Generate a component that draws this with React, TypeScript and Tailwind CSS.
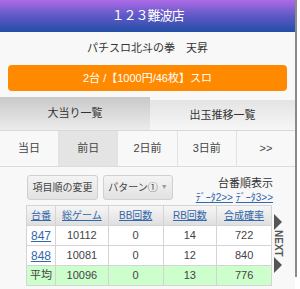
const font = { fontFamily: '"Liberation Sans", "Noto Sans CJK JP", sans-serif' };

const days = ["当日", "前日", "2日前", "3日前", ">>"];
const heads = ["台番", "総ゲーム", "BB回数", "RB回数", "合成確率"];
const rows = [
  { no: "847", g: "10112", bb: "0", rb: "14", p: "722" },
  { no: "848", g: "10081", bb: "0", rb: "12", p: "840" },
];

export default function App() {
  return (
    <div className="flex h-[289px] w-[300px] overflow-hidden bg-white" style={font}>
      <div className="flex w-[295px] flex-col bg-[#f8f8f8]">
        {/* 店名 */}
        <div className="flex h-[32px] items-center justify-center bg-gradient-to-b from-[#ad6ae6] via-[#5d58c6] to-[#1f4ea6] text-[13px] tracking-[-1px] text-white">
          １２３難波店
        </div>

        <div className="flex h-[33px] items-center justify-center text-[11px] text-[#333]">
          パチスロ北斗の拳　天昇
        </div>

        <div className="mx-[8px] flex h-[26px] items-center justify-center rounded-[4px] bg-[#ff8a00] text-[11px] text-white">
          2台 /【1000円/46枚】スロ
        </div>

        {/* タブ */}
        <div className="mt-[6px] flex h-[34px] border-b border-[#d8d8d8]">
          <div className="flex w-[150px] items-center justify-center bg-gradient-to-b from-[#c9c9c9] to-[#ececec] text-[11px] text-[#333]">
            大当り一覧
          </div>
          <div className="mt-[3px] flex flex-1 items-center justify-center bg-gradient-to-b from-[#e4e4e4] to-[#f6f6f6] text-[11px] text-[#333]">
            出玉推移一覧
          </div>
        </div>

        <div className="flex h-[36px] border-b border-[#dcdcdc]">
          {days.map((d, i) => (
            <div
              key={d}
              className={`flex flex-1 items-center justify-center border-r border-[#e2e2e2] text-[11px] text-[#444] last:border-r-0 ${
                i === 1 ? "bg-[#e4e4e4]" : "bg-[#f8f8f8]"
              }`}
            >
              {d}
            </div>
          ))}
        </div>

        {/* ボタン類 */}
        <div className="mt-[8px] flex pl-[27px] pr-[22px]">
          <div className="flex h-[25px] w-[71px] items-center justify-center rounded-[3px] border border-[#d0d0d0] bg-gradient-to-b from-[#f4f4f4] to-[#e2e2e2] text-[10px] text-[#444]">
            項目順の変更
          </div>
          <div className="ml-[5px] flex h-[25px] w-[70px] items-center justify-center gap-[3px] rounded-[3px] border border-[#d0d0d0] bg-gradient-to-b from-[#f4f4f4] to-[#e2e2e2] text-[10px] text-[#444]">
            パターン①
            <span className="text-[7px] text-[#999]">▼</span>
          </div>
          <div className="ml-auto flex flex-col items-end">
            <span className="text-[11px] leading-[16px] text-[#333]">台番順表示</span>
            <span className="text-[10px] leading-[13px] text-[#3366aa]">
              <span className="underline">ﾃﾞｰﾀ2&gt;&gt;</span> <span className="underline">ﾃﾞｰﾀ3&gt;&gt;</span>
            </span>
          </div>
        </div>

        {/* テーブル */}
        <div className="mt-[1px] flex pl-[26px]">
          <table className="w-[246px] border-collapse text-center text-[11px] text-[#444]">
            <colgroup>
              <col className="w-[29px]" />
              <col className="w-[53px]" />
              <col className="w-[55px]" />
              <col className="w-[54px]" />
              <col className="w-[55px]" />
            </colgroup>
            <thead>
              <tr className="h-[20px] bg-gradient-to-b from-[#f6f6f6] to-[#dedede]">
                {heads.map((h) => (
                  <th key={h} className="border border-[#d4d4d4] p-0 text-[10px] font-normal text-[#3366aa] underline">
                    {h}
                  </th>
                ))}
              </tr>
            </thead>
            <tbody>
              {rows.map((r) => (
                <tr key={r.no} className="h-[20px] bg-white">
                  <td className="border border-[#d4d4d4] p-0 text-[12px] text-[#3366aa] underline">{r.no}</td>
                  <td className="border border-[#d4d4d4] p-0">{r.g}</td>
                  <td className="border border-[#d4d4d4] p-0">{r.bb}</td>
                  <td className="border border-[#d4d4d4] p-0">{r.rb}</td>
                  <td className="border border-[#d4d4d4] p-0">{r.p}</td>
                </tr>
              ))}
              <tr className="h-[20px] bg-[#ccffcc]">
                <td className="border border-[#d4d4d4] p-0 text-[11px]">平均</td>
                <td className="border border-[#d4d4d4] p-0">10096</td>
                <td className="border border-[#d4d4d4] p-0">0</td>
                <td className="border border-[#d4d4d4] p-0">13</td>
                <td className="border border-[#d4d4d4] p-0">776</td>
              </tr>
            </tbody>
          </table>

          {/* NEXT */}
          <div className="mt-[9px] flex w-[11px] flex-col items-center">
            <svg width="8" height="16" viewBox="0 0 8 16">
              <polygon points="0,0 8,8 0,16" fill="#555" />
            </svg>
            <span className="my-[1px] text-[10px] font-bold leading-[10px] text-[#555] [writing-mode:vertical-rl]">NEXT</span>
            <svg width="8" height="16" viewBox="0 0 8 16">
              <polygon points="0,0 8,8 0,16" fill="#555" />
            </svg>
          </div>
        </div>
      </div>
      <div className="h-[277px] w-[2px] bg-[#8a8a8a]" />
    </div>
  );
}
